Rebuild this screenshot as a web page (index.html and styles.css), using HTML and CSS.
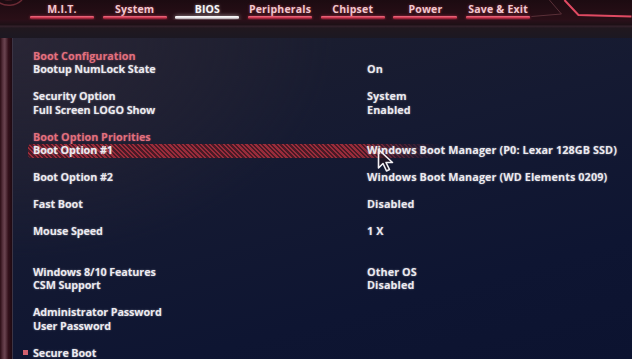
FILE: index.html
```html
<!DOCTYPE html>
<html>
<head>
<meta charset="utf-8">
<link rel="stylesheet" href="styles.css">
</head>
<body>
<div class="screen">
  <header class="topbar">
    <svg class="logo" width="30" height="20" viewBox="0 0 30 20">
      <path d="M-2 2 A 19 19 0 0 0 22 0" fill="none" stroke="#6a2a34" stroke-width="1.5"/>
      <path d="M-2 -4 A 14 14 0 0 0 16 -2" fill="none" stroke="#4a1c26" stroke-width="1"/>
    </svg>
    <nav class="tabs">
      <div class="tab"><span class="tab-label">M.I.T.</span><span class="tab-line"></span></div>
      <div class="tab"><span class="tab-label">System</span><span class="tab-line"></span></div>
      <div class="tab active"><span class="tab-label">BIOS</span><span class="tab-line"></span></div>
      <div class="tab"><span class="tab-label">Peripherals</span><span class="tab-line"></span></div>
      <div class="tab"><span class="tab-label">Chipset</span><span class="tab-line"></span></div>
      <div class="tab"><span class="tab-label">Power</span><span class="tab-line"></span></div>
      <div class="tab"><span class="tab-label">Save &amp; Exit</span><span class="tab-line"></span></div>
    </nav>
    <svg class="deco" width="100" height="20" viewBox="0 0 100 20">
      <path d="M18 0 L30 14 L0 16.5" fill="none" stroke="#5a3038" stroke-width="1"/>
      <path d="M33 0 L47 15 L100 16.5" fill="none" stroke="#e04a62" stroke-width="2"/>
    </svg>
  </header>
  <div class="band"></div>
  <div class="content">
    <div class="rail"></div>
    <main class="panel">
      <div class="head">Boot Configuration</div>
      <div class="label">Bootup NumLock State</div><div class="value">On</div>
      <div class="sp"></div>
      <div class="label">Security Option</div><div class="value">System</div>
      <div class="label">Full Screen LOGO Show</div><div class="value">Enabled</div>
      <div class="sp"></div>
      <div class="head">Boot Option Priorities</div>
      <div class="selected"><div class="label">Boot Option #1</div><div class="value">Windows Boot Manager (P0: Lexar 128GB SSD)</div></div>
      <div class="sp"></div>
      <div class="label">Boot Option #2</div><div class="value">Windows Boot Manager (WD Elements 0209)</div>
      <div class="sp"></div>
      <div class="label">Fast Boot</div><div class="value">Disabled</div>
      <div class="sp"></div>
      <div class="label">Mouse Speed</div><div class="value">1 X</div>
      <div class="sp"></div>
      <div class="sp"></div>
      <div class="label">Windows 8/10 Features</div><div class="value">Other OS</div>
      <div class="label">CSM Support</div><div class="value">Disabled</div>
      <div class="sp"></div>
      <div class="label">Administrator Password</div><div class="value"></div>
      <div class="label">User Password</div><div class="value"></div>
      <div class="sp"></div>
      <div class="label bullet">Secure Boot</div><div class="value"></div>
    </main>
  </div>
  <svg class="cursor" width="20" height="26" viewBox="0 0 20 26">
    <path d="M1.5 1.5 L1.5 20 L6 15.5 L9.5 23 L12.5 21.5 L9 14.5 L15.5 14.5 Z" fill="rgba(40,20,30,0.55)" stroke="#f2f0f4" stroke-width="1.6" stroke-linejoin="round"/>
  </svg>
</div>
</body>
</html>
```

FILE: styles.css
```css
* { box-sizing: border-box; }
html, body { margin: 0; padding: 0; }
body {
  width: 632px;
  height: 359px;
  overflow: hidden;
  background: #120b10;
  font-family: "Open Sans", "DejaVu Sans", sans-serif;
  font-weight: 700;
}
.screen {
  position: relative;
  width: 632px;
  height: 359px;
  display: flex;
  flex-direction: column;
}
.topbar {
  height: 20px;
  display: flex;
  background: linear-gradient(180deg, #1c0b11 0%, #2a0f17 100%);
}
.logo { flex: none; display: block; }
.tabs {
  display: flex;
  gap: 8.7px;
}
.tab {
  width: 64px;
  display: flex;
  flex-direction: column;
  align-items: center;
}
.tab-label {
  height: 16px;
  line-height: 18px;
  font-size: 10.5px;
  color: #f0c8cf;
  text-shadow: 0 0 3px rgba(230, 80, 100, 0.6);
  letter-spacing: 0.2px;
}
.tab-line {
  width: 64px;
  height: 3px;
  border-radius: 1px;
  background: linear-gradient(180deg, #f07286 0%, #c8344c 60%, #7a1a2c 100%);
  box-shadow: 0 0 3px rgba(230, 60, 90, 0.6);
}
.tab.active .tab-label { color: #f6f6f8; text-shadow: 0 0 3px rgba(255, 255, 255, 0.5); }
.tab.active .tab-line {
  background: linear-gradient(180deg, #ffffff 0%, #e4e0e4 60%, #a89aa0 100%);
  box-shadow: 0 0 4px rgba(255, 255, 255, 0.6);
}
.deco { flex: 1; display: block; margin-left: 1px; }
.band {
  height: 20px;
  background: linear-gradient(180deg, #2a101a 0%, #1e1016 25%, #32202a 35%, #21181f 45%, #1c1822 100%);
}
.content {
  flex: 1;
  display: flex;
}
.rail {
  width: 12px;
  background: linear-gradient(90deg, #2a0c14 0%, #5a3440 25%, #6a4450 40%, #32101a 70%, #1e0a12 100%);
}
.panel {
  flex: 1;
  border-left: 1px solid #3c3444;
  padding: 11px 0 0 20px;
  display: grid;
  grid-template-columns: 334px 1fr;
  grid-auto-rows: 13.5px;
  align-content: start;
  background:
    radial-gradient(ellipse 320px 220px at 0% 0%, rgba(42, 38, 54, 0.9), rgba(42, 38, 54, 0) 100%),
    linear-gradient(165deg, #1e1f2e 0%, #151a32 40%, #0e1532 75%, #0c1330 100%);
  font-size: 10.8px;
  line-height: 13.5px;
  color: #eceaf0;
  text-shadow: 0 0 2px rgba(255, 255, 255, 0.45);
}
.head {
  grid-column: 1 / 3;
  color: #e2707e;
  text-shadow: 0 0 2px rgba(230, 100, 120, 0.5);
}
.sp { grid-column: 1 / 3; }
.label, .value { white-space: nowrap; }
.label { letter-spacing: -0.1px; }
.value { letter-spacing: 0.1px; }
.selected {
  grid-column: 1 / 3;
  display: grid;
  grid-template-columns: 334px 1fr;
  position: relative;
}
.selected::before {
  content: "";
  position: absolute;
  left: -5px;
  top: 1px;
  width: 412px;
  height: 14px;
  border-radius: 3px 0 0 3px;
  background: repeating-linear-gradient(45deg, #a52e3c 0 1.6px, #4e1a26 1.6px 3.2px);
  opacity: 0.92;
  -webkit-mask-image: linear-gradient(90deg, #000 0%, #000 80%, rgba(0,0,0,0.4) 92%, rgba(0,0,0,0) 100%);
  mask-image: linear-gradient(90deg, #000 0%, #000 80%, rgba(0,0,0,0.4) 92%, rgba(0,0,0,0) 100%);
  z-index: 0;
}
.selected .label, .selected .value { position: relative; z-index: 1; }
.bullet { position: relative; }
.bullet::before {
  content: "";
  position: absolute;
  left: -10px;
  top: 4px;
  width: 5px;
  height: 5px;
  background: #d0606e;
}
.cursor {
  position: absolute;
  left: 377px;
  top: 148px;
}
```
